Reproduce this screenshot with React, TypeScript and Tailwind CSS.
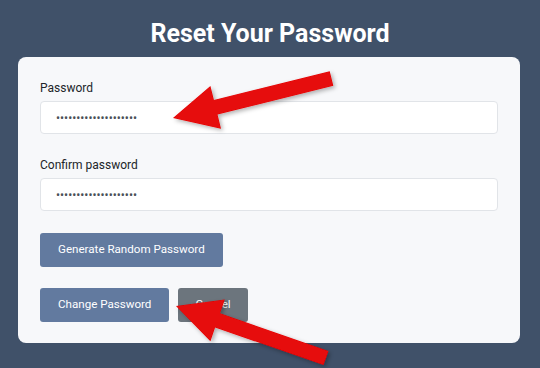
import React from 'react';

type Point = { x: number; y: number };

// builds a block arrow polygon from the tip to the middle of the tail
const arrowPoints = (tip: Point, tail: Point, headLen = 44, headHalf = 22, shaftHalf = 7.5) => {
  const dx = tail.x - tip.x;
  const dy = tail.y - tip.y;
  const len = Math.hypot(dx, dy);
  const ux = dx / len;
  const uy = dy / len;
  const nx = -uy;
  const ny = ux;
  const bx = tip.x + ux * headLen;
  const by = tip.y + uy * headLen;

  const pts: [number, number][] = [
    [tip.x, tip.y],
    [bx + nx * headHalf, by + ny * headHalf],
    [bx + nx * shaftHalf, by + ny * shaftHalf],
    [tail.x + nx * shaftHalf, tail.y + ny * shaftHalf],
    [tail.x - nx * shaftHalf, tail.y - ny * shaftHalf],
    [bx - nx * shaftHalf, by - ny * shaftHalf],
    [bx - nx * headHalf, by - ny * headHalf],
  ];

  return pts.map(([x, y]) => `${x.toFixed(1)},${y.toFixed(1)}`).join(' ');
};

const Field = ({ label, value }: { label: string; value: string }) => (
  <div className="flex flex-col">
    <label className="mb-1 text-[12px] leading-[18px] text-[#212529]">{label}</label>
    <input
      type="password"
      readOnly
      value={value}
      className="h-[33px] w-full rounded-[4px] border border-[#e1e4e8] bg-white px-[15px] text-[12px] text-[#495057] outline-none"
    />
  </div>
);

const App: React.FC = () => {
  const secret = 'abcdefghijklmnopqrst';

  return (
    <div className="relative min-h-screen w-full overflow-hidden bg-[#405169] font-['Roboto',sans-serif]">
      <h1 className="pt-[18px] text-center text-[25px] font-bold leading-[32px] text-white">
        Reset Your Password
      </h1>

      <div className="ml-[18px] mt-[7px] w-[502px] rounded-[8px] bg-[#f7f8fa] px-[22px] pb-[21px] pt-[22px]">
        <div className="flex flex-col gap-[22px]">
          <Field label="Password" value={secret} />
          <Field label="Confirm password" value={secret} />
        </div>

        <div className="mt-[22px] flex">
          <button className="h-[34px] rounded-[3px] bg-[#627a9f] px-[18px] text-[11.6px] text-white">
            Generate Random Password
          </button>
        </div>

        <div className="mt-[21px] flex gap-[9px]">
          <button className="h-[34px] rounded-[3px] bg-[#627a9f] px-[18px] text-[11.6px] text-white">
            Change Password
          </button>
          <button className="h-[34px] rounded-[3px] bg-[#6c757d] px-[17px] text-[11.6px] text-white">
            Cancel
          </button>
        </div>
      </div>

      <svg
        className="pointer-events-none absolute left-0 top-0"
        width="540"
        height="368"
        viewBox="0 0 540 368"
      >
        <defs>
          <filter id="arrowShadow" x="-20%" y="-20%" width="140%" height="140%">
            <feDropShadow dx="2" dy="2" stdDeviation="2" floodColor="#000" floodOpacity="0.3" />
          </filter>
        </defs>
        <g fill="#e60707" filter="url(#arrowShadow)">
          <polygon points={arrowPoints({ x: 173, y: 118 }, { x: 331.5, y: 78.5 })} />
          <polygon points={arrowPoints({ x: 176, y: 306 }, { x: 326, y: 358 })} />
        </g>
      </svg>
    </div>
  );
};

export default App;
